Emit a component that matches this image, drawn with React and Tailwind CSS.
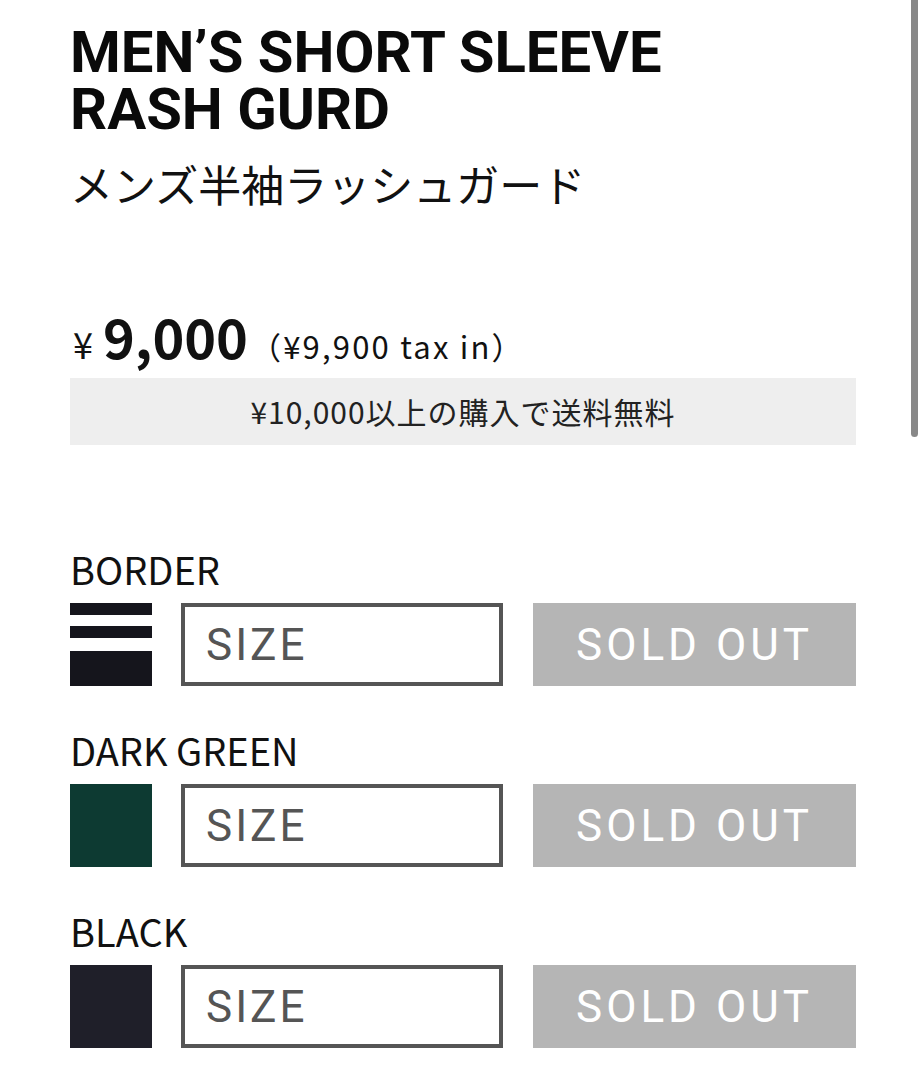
const VARIANTS = [
  { name: "BORDER", swatch: "border" },
  { name: "DARK GREEN", swatch: "bg-[#0d3a32]" },
  { name: "BLACK", swatch: "bg-[#1f1f29]" },
];

function Swatch({ kind }) {
  if (kind === "border") {
    return (
      <div className="w-[82px] h-[83px] flex flex-col shrink-0 bg-white">
        <div className="h-[12px] bg-[#15151c]" />
        <div className="h-[11px]" />
        <div className="h-[12px] bg-[#15151c]" />
        <div className="h-[13px]" />
        <div className="flex-1 bg-[#15151c]" />
      </div>
    );
  }
  return <div className={`w-[82px] h-[83px] shrink-0 ${kind}`} />;
}

function VariantRow({ name, swatch }) {
  return (
    <div className="flex flex-col">
      <div className="text-[38px] leading-[44px] text-[#111] font-['Noto_Sans_CJK_JP',sans-serif]">
        {name}
      </div>
      <div className="flex items-center mt-[12px]">
        <Swatch kind={swatch} />
        <div className="ml-[29px] w-[322px] h-[83px] border-[4px] border-[#555] flex items-center pl-[21px] text-[44px] tracking-[3px] text-[#555] font-['Roboto',sans-serif]">
          SIZE
        </div>
        <div className="ml-[30px] w-[323px] h-[83px] bg-[#b5b5b5] flex items-center justify-center text-[44px] tracking-[4px] text-white font-['Roboto',sans-serif]">
          SOLD OUT
        </div>
      </div>
    </div>
  );
}

export default function App() {
  return (
    <div className="relative w-[922px] h-[1080px] bg-white overflow-hidden">
      {/* scrollbar */}
      <div className="absolute right-[4px] top-0 w-[7px] h-[437px] bg-[#888] rounded-b-full" />

      <div className="pl-[70px] pt-[24px]">
        <h1 className="font-['Roboto',sans-serif] font-bold text-[58px] leading-[57px] text-[#0a0a0a]">
          MEN’S SHORT SLEEVE
          <br />
          RASH GURD
        </h1>
        <p className="mt-[20px] text-[43px] leading-[50px] text-[#111] font-['Noto_Sans_CJK_JP',sans-serif]">
          メンズ半袖ラッシュガード
        </p>

        <div className="mt-[98px] flex items-baseline font-['Noto_Sans_CJK_JP',sans-serif] text-[#111]">
          <span className="text-[36px] ml-[3px] mr-[10px]">¥</span>
          <span className="text-[54px] font-bold leading-[60px]">9,000</span>
          <span className="ml-[2px] text-[31px] tracking-[2.2px]">（¥9,900 tax in）</span>
        </div>

        <div className="mt-[8px] w-[786px] h-[67px] bg-[#eeeeee] flex items-center justify-center text-[30px] text-[#222] tracking-[1px] font-['Noto_Sans_CJK_JP',sans-serif]">
          ¥10,000以上の購入で送料無料
        </div>

        <div className="mt-[102px] flex flex-col gap-[42px]">
          {VARIANTS.map((v) => (
            <VariantRow key={v.name} {...v} />
          ))}
        </div>
      </div>
    </div>
  );
}
